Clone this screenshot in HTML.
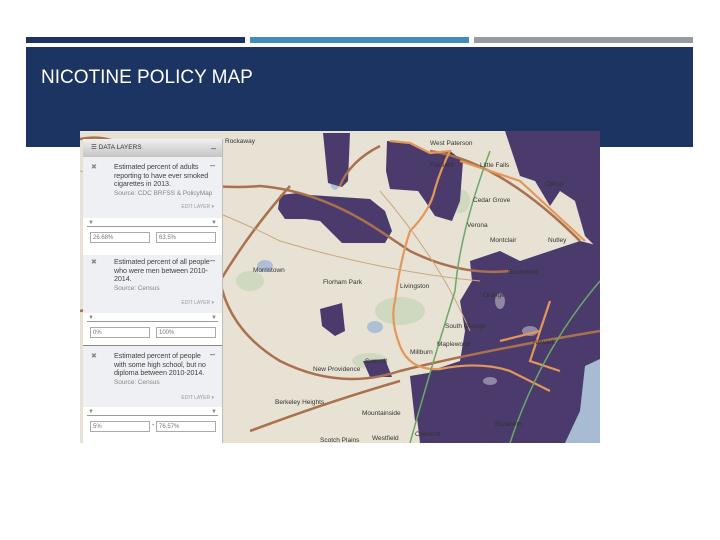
<!DOCTYPE html>
<html><head><meta charset="utf-8"><style>
body{margin:0;width:720px;height:540px;background:#fff;position:relative;overflow:hidden;font-family:"Liberation Sans",sans-serif}
.bar{position:absolute;top:37px;height:6px}
.hdr{position:absolute;left:26px;top:47px;width:667px;height:100px;background:#1c3461}
.t{position:absolute;left:41px;top:67px;color:#fff;font-size:19px}
.map{position:absolute;left:80px;top:131px;width:520px;height:312px;overflow:hidden;background:#e7e2d3}
.panel{position:absolute;left:3px;top:8px;width:139px;height:304px;background:#eff0f4;border-right:1px solid #bbb;font-size:7.2px;color:#444}
.ph{position:absolute;left:0;top:0;width:139px;height:18px;background:linear-gradient(#f0f0f0,#c4c4c4);font-size:6.5px;line-height:18px;color:#333}
.sec{position:absolute;left:31px;width:96px;line-height:8.5px;letter-spacing:-.1px}
.x{position:absolute;left:8px;color:#888;font-size:7px}
.m{position:absolute;right:7px;font-size:9px;color:#444}
.s{color:#888;white-space:nowrap;font-size:6.6px}
.e{position:absolute;right:8px;color:#999;font-size:5px}
.rng{position:absolute;left:0;width:139px;background:#fff}
.rng .l{position:absolute;left:4px;right:4px;top:8px;border-top:1px solid #999}
.tri{position:absolute;top:2px;font-size:6px;color:#888}
.inp{position:absolute;top:14px;height:11px;width:60px;border:1px solid #aaa;font-size:6px;line-height:11px;padding-left:2px;box-sizing:border-box;color:#777;background:#fff}
.lbl{font-family:"Liberation Sans",sans-serif;font-size:6.5px;fill:#333}
</style></head><body>
<div class="bar" style="left:26px;width:219px;background:#1c3461"></div>
<div class="bar" style="left:250px;width:219px;background:#3f8db9"></div>
<div class="bar" style="left:474px;width:219px;background:#959ba3"></div>
<div class="hdr"></div>
<div class="t">NICOTINE POLICY MAP</div>
<div class="map">
<svg width="520" height="312" style="position:absolute;left:0;top:0">
<g fill="#cfd9bf"><ellipse cx="320" cy="180" rx="25" ry="14"/><ellipse cx="380" cy="70" rx="10" ry="12"/><ellipse cx="170" cy="150" rx="14" ry="10"/><ellipse cx="290" cy="230" rx="18" ry="8"/></g>
<g fill="#aebfd5"><ellipse cx="255" cy="45" rx="6" ry="14"/><ellipse cx="295" cy="196" rx="8" ry="6"/><ellipse cx="185" cy="135" rx="8" ry="6"/></g>
<g fill="#4a3b6c">
<path d="M307 10 L330 12 L350 22 L370 20 L383 30 L380 70 L372 90 L355 85 L345 70 L338 60 L310 58 L306 40Z"/>
<path d="M243 2 L270 2 L268 50 L262 56 L248 52Z"/>
<path d="M200 64 L218 62 L230 64 L290 68 L305 80 L312 100 L305 112 L262 112 L240 90 L225 88 L205 88 L198 78Z"/>
<path d="M425 0 L520 0 L520 120 L505 105 L495 70 L480 60 L470 75 L455 50 L440 45Z"/>
<path d="M390 130 L420 120 L440 130 L470 120 L500 110 L520 115 L520 312 L340 312 L335 270 L350 240 L380 230 L385 200 L380 170 L392 150Z"/>
<path d="M240 178 L262 172 L265 200 L255 205 L242 195Z"/>
<path d="M283 230 L305 228 L312 246 L290 246Z"/>
<path d="M330 245 L360 240 L360 280 L335 290Z"/>
</g>
<path d="M505 235 L520 228 L520 312 L485 312 L500 280Z" fill="#a7bcd3"/>
<g fill="#8f87a3"><ellipse cx="450" cy="200" rx="8" ry="5"/><ellipse cx="420" cy="170" rx="5" ry="8"/><ellipse cx="410" cy="250" rx="7" ry="4"/></g>
<g fill="none" stroke="#a9714d" stroke-width="2.5">
<path d="M0 8 Q40 0 80 40 Q120 60 180 55 Q240 60 300 100 L330 120 Q380 145 430 140"/>
<path d="M210 55 Q170 100 140 150 Q150 200 200 230 Q260 260 320 240 Q400 220 520 200"/>
<path d="M0 180 Q60 170 140 120"/>
<path d="M170 300 Q250 270 320 250"/>
<path d="M350 20 Q420 30 500 110"/>
<path d="M260 55 Q270 30 300 15"/>
</g>
<g fill="none" stroke="#e4975b" stroke-width="2.2">
<path d="M310 10 L330 12 L350 22 L370 20 Q360 40 355 58 Q350 80 330 100 Q320 130 315 170 Q310 190 320 215 Q330 240 360 238 Q400 230 430 240 L470 260"/>
<path d="M380 30 L440 50 L505 110"/>
<path d="M420 210 L460 200 L470 170 L450 230 L480 240"/>
</g>
<g fill="none" stroke="#c9a77f" stroke-width="1"><path d="M0 40 Q100 60 200 110 Q300 140 400 150"/><path d="M300 60 Q360 130 390 200"/></g>
<g fill="none" stroke="#6aa86a" stroke-width="1.5"><path d="M410 20 Q380 100 375 160 Q350 240 330 312"/><path d="M520 150 Q460 220 430 312"/></g>
<g>
<text x="145" y="12" class="lbl">Rockaway</text>
<text x="350" y="14" class="lbl" fill="#fff">West Paterson</text>
<text x="350" y="36" class="lbl" fill="#fff">Fairfield</text>
<text x="400" y="36" class="lbl">Little Falls</text>
<text x="465" y="55" class="lbl" fill="#fff">Clifton</text>
<text x="393" y="71" class="lbl">Cedar Grove</text>
<text x="387" y="96" class="lbl">Verona</text>
<text x="410" y="111" class="lbl">Montclair</text>
<text x="468" y="111" class="lbl">Nutley</text>
<text x="173" y="141" class="lbl">Morristown</text>
<text x="243" y="153" class="lbl">Florham Park</text>
<text x="320" y="157" class="lbl">Livingston</text>
<text x="428" y="143" class="lbl" fill="#fff">Bloomfield</text>
<text x="403" y="166" class="lbl" fill="#fff">Orange</text>
<text x="365" y="197" class="lbl">South Orange</text>
<text x="453" y="213" class="lbl" fill="#fff">Newark</text>
<text x="357" y="215" class="lbl">Maplewood</text>
<text x="330" y="223" class="lbl">Millburn</text>
<text x="285" y="232" class="lbl">Summit</text>
<text x="233" y="240" class="lbl">New Providence</text>
<text x="195" y="273" class="lbl">Berkeley Heights</text>
<text x="282" y="284" class="lbl">Mountainside</text>
<text x="335" y="305" class="lbl" fill="#fff">Cranford</text>
<text x="415" y="295" class="lbl" fill="#fff">Elizabeth</text>
<text x="240" y="311" class="lbl">Scotch Plains</text>
<text x="292" y="309" class="lbl">Westfield</text>
</g>
</svg>
<div class="panel">
<div class="ph"><span style="margin-left:8px">☰</span> DATA LAYERS <span style="position:absolute;right:6px;font-size:9px">–</span></div>
<span class="x" style="top:24px">✖</span><span class="m" style="top:21px">–</span>
<div class="sec" style="top:24px">Estimated percent of adults reporting to have ever smoked cigarettes in 2013.<br><span class="s">Source: CDC BRFSS &amp; PolicyMap</span></div>
<span class="e" style="top:65px">EDIT LAYER ▾</span>
<div class="rng" style="top:79px;height:37px"><div class="l"></div><span class="tri" style="left:5px">▼</span><span class="tri" style="right:5px">▼</span><div class="inp" style="left:7px">26.68%</div><div class="inp" style="left:73px">63.5%</div></div>
<span class="x" style="top:119px">✖</span><span class="m" style="top:116px">–</span>
<div class="sec" style="top:119px">Estimated percent of all people who were men between 2010-2014.<br><span class="s">Source: Census</span></div>
<span class="e" style="top:161px">EDIT LAYER ▾</span>
<div class="rng" style="top:174px;height:32px"><div class="l"></div><span class="tri" style="left:5px">▼</span><span class="tri" style="right:5px">▼</span><div class="inp" style="left:7px">0%</div><div class="inp" style="left:73px">100%</div></div>
<div style="position:absolute;left:0;top:206px;width:139px;border-top:1px solid #888"></div>
<span class="x" style="top:213px">✖</span><span class="m" style="top:210px">–</span>
<div class="sec" style="top:213px">Estimated percent of people with some high school, but no diploma between 2010-2014.<br><span class="s">Source: Census</span></div>
<span class="e" style="top:256px">EDIT LAYER ▾</span>
<div class="rng" style="top:268px;height:36px"><div class="l"></div><span class="tri" style="left:5px">▼</span><span class="tri" style="right:5px">▼</span><div class="inp" style="left:7px">5%</div><span style="position:absolute;left:69px;top:15px;font-size:7px">-</span><div class="inp" style="left:73px">76.57%</div></div>
</div>
</div>
</body></html>
